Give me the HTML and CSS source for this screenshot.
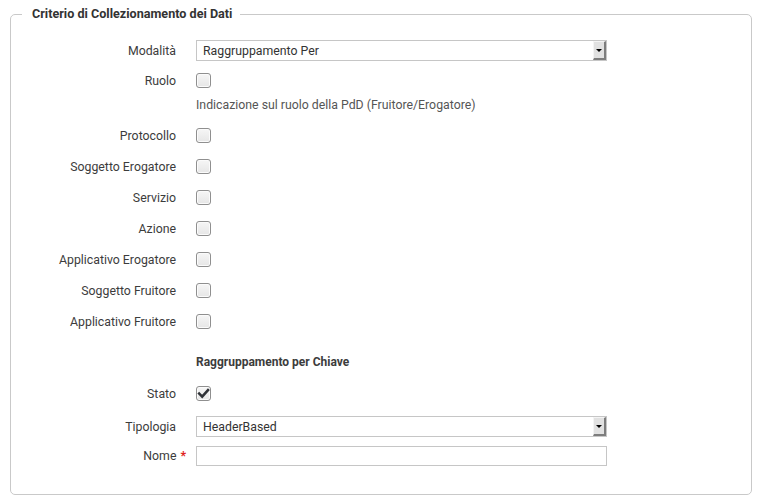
FILE: index.html
```html
<!DOCTYPE html>
<html lang="it">
<head>
<meta charset="utf-8">
<title>Criterio di Collezionamento dei Dati</title>
<link rel="stylesheet" href="styles.css">
</head>
<body>
<fieldset class="panel">
  <legend class="panel-title">Criterio di Collezionamento dei Dati</legend>
  <div class="form">
    <div class="row row-first">
      <label class="lbl">Modalità</label>
      <div class="select"><span class="select-text">Raggruppamento Per</span><span class="select-btn"><span class="tri"></span></span></div>
    </div>
    <div class="row">
      <label class="lbl">Ruolo</label>
      <span class="cb"></span>
    </div>
    <div class="note">Indicazione sul ruolo della PdD (Fruitore/Erogatore)</div>
    <div class="row row-after-note">
      <label class="lbl">Protocollo</label>
      <span class="cb"></span>
    </div>
    <div class="row">
      <label class="lbl">Soggetto Erogatore</label>
      <span class="cb"></span>
    </div>
    <div class="row">
      <label class="lbl">Servizio</label>
      <span class="cb"></span>
    </div>
    <div class="row">
      <label class="lbl">Azione</label>
      <span class="cb"></span>
    </div>
    <div class="row">
      <label class="lbl">Applicativo Erogatore</label>
      <span class="cb"></span>
    </div>
    <div class="row">
      <label class="lbl">Soggetto Fruitore</label>
      <span class="cb"></span>
    </div>
    <div class="row">
      <label class="lbl">Applicativo Fruitore</label>
      <span class="cb"></span>
    </div>
    <div class="subhead">Raggruppamento per Chiave</div>
    <div class="row row-after-head">
      <label class="lbl">Stato</label>
      <span class="cb cb-checked"><svg viewBox="0 0 15 15" width="15" height="15"><path d="M3.2 7.6 L6.2 10.6 L12 4.2" fill="none" stroke="#2f3237" stroke-width="2.6" stroke-linecap="square" stroke-linejoin="miter"/></svg></span>
    </div>
    <div class="row row-tipologia">
      <label class="lbl">Tipologia</label>
      <div class="select"><span class="select-text">HeaderBased</span><span class="select-btn"><span class="tri"></span></span></div>
    </div>
    <div class="row row-nome">
      <label class="lbl">Nome<span class="req">*</span></label>
      <span class="input"></span>
    </div>
  </div>
</fieldset>
</body>
</html>
```

FILE: styles.css
```css
html, body {
  margin: 0;
  padding: 0;
  background: #ffffff;
}
body {
  font-family: Roboto, "Liberation Sans", Arial, sans-serif;
  font-size: 12.3px;
  color: #3a3a3a;
}
.panel {
  margin: 6px 8px 0 10px;
  padding: 18px 11px 28px 11px;
  border: 1px solid #c9c9c9;
  border-radius: 5px;
  min-width: 0;
}
.panel-title {
  padding: 0 8px 0 10px;
  font-weight: bold;
  font-size: 12.6px;
  line-height: 16px;
  color: #333333;
}
.form {
  display: flex;
  flex-direction: column;
}
.row {
  display: flex;
  align-items: center;
  height: 21px;
  margin-top: 10px;
}
.row-first { margin-top: 0; }
.row + .row { margin-top: 10px; }
.row-first + .row { margin-top: 9px; }
.lbl {
  width: 154px;
  margin-right: 20px;
  text-align: right;
  line-height: 14px;
  color: #3c3c3c;
  flex: none;
}
.select {
  width: 411px;
  height: 21px;
  box-sizing: border-box;
  border: 1px solid #c6c6c6;
  display: flex;
  align-items: center;
  justify-content: space-between;
  background: #fff;
}
.select-text {
  padding-left: 6px;
  color: #333;
  line-height: 14px;
}
.select-btn {
  width: 13px;
  height: 19px;
  box-sizing: border-box;
  background: #e1e1e1;
  border-top: 1px solid #f4f4f4;
  border-left: 1px solid #f4f4f4;
  border-right: 2px solid #7d7d7d;
  border-bottom: 2px solid #7d7d7d;
  display: flex;
  align-items: center;
  justify-content: center;
}
.tri {
  width: 0;
  height: 0;
  border-left: 3px solid transparent;
  border-right: 3px solid transparent;
  border-top: 3px solid #000;
  margin-top: 1px;
}
.cb {
  width: 15px;
  height: 15px;
  box-sizing: border-box;
  border: 1px solid #8f8f8f;
  border-radius: 3px;
  background: linear-gradient(#f6f6f6, #e6e6e6);
  box-shadow: inset 0 0 0 1px #fbfbfb;
  display: block;
  position: relative;
}
.cb-checked svg {
  display: block;
  margin: -1px 0 0 -1px;
}
.note {
  margin: 7px 0 0 174px;
  line-height: 14px;
  color: #555;
}
.row-after-note { margin-top: 13px !important; }
.subhead {
  margin: 23px 0 0 174px;
  font-size: 12px;
  line-height: 14px;
  font-weight: bold;
  color: #3c3c3c;
}
.row-after-head { margin-top: 14px !important; }
.row-tipologia { margin-top: 12px !important; }
.row-nome { margin-top: 9px !important; height: 20px; }
.req {
  color: #e02020;
  margin-left: 4px;
  margin-right: -10px;
  font-weight: bold;
}
.input {
  display: block;
  width: 411px;
  height: 20px;
  box-sizing: border-box;
  border: 1px solid #c6c6c6;
  background: #fff;
}
```
